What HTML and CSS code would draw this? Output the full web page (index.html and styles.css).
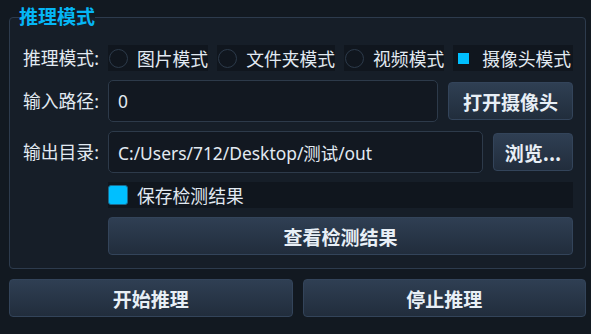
FILE: index.html
```html
<!DOCTYPE html>
<html lang="zh-CN">
<head>
    <meta charset="UTF-8">
    <meta name="viewport" content="width=device-width, initial-scale=1.0">
    <title>推理模式</title>
    <link rel="stylesheet" href="styles.css">
</head>
<body>
    <fieldset class="group">
        <legend class="group-title">推理模式</legend>

        <div class="form-row">
            <span class="label">推理模式:</span>
            <div class="mode-list">
                <label class="mode"><span class="radio"></span>图片模式</label>
                <label class="mode"><span class="radio"></span>文件夹模式</label>
                <label class="mode"><span class="radio"></span>视频模式</label>
                <label class="mode mode-last"><span class="radio checked"></span>摄像头模式</label>
            </div>
        </div>

        <div class="form-row">
            <span class="label">输入路径:</span>
            <div class="field">
                <input type="text" class="text-input" value="0">
                <button class="btn btn-side btn-cam">打开摄像头</button>
            </div>
        </div>

        <div class="form-row">
            <span class="label">输出目录:</span>
            <div class="field">
                <input type="text" class="text-input" value="C:/Users/712/Desktop/测试/out">
                <button class="btn btn-side btn-browse">浏览...</button>
            </div>
        </div>

        <div class="form-row">
            <span class="label"></span>
            <label class="save-check"><span class="checkbox"></span>保存检测结果</label>
        </div>

        <div class="form-row">
            <span class="label"></span>
            <button class="btn btn-wide">查看检测结果</button>
        </div>
    </fieldset>

    <div class="actions">
        <button class="btn btn-action">开始推理</button>
        <button class="btn btn-action">停止推理</button>
    </div>
</body>
</html>
```

FILE: styles.css
```css
body {
    margin: 0;
    padding: 7px 5px 0 9px;
    background-color: #121921;
    color: #e2eaf2;
    font-family: "Noto Sans", "Noto Sans CJK SC", sans-serif;
    font-size: 17.8px;
    width: 577px;
}
.group {
    margin: 0;
    padding: 18px 12px 13px 13px;
    border: 1px solid #2d3b4d;
    border-radius: 4px;
    background-color: #161e28;
    display: flex;
    flex-direction: column;
    gap: 9px;
}
.group-title {
    margin-left: -4px;
    padding: 0;
    color: #05b6f5;
    font-size: 19px;
    font-weight: bold;
    line-height: 20px;
}
.form-row {
    display: flex;
    align-items: center;
}
.label {
    width: 85px;
    flex-shrink: 0;
    line-height: 22px;
}
.mode-list {
    flex: 1;
    display: flex;
    gap: 9px;
}
.mode {
    display: flex;
    align-items: center;
    gap: 9px;
    height: 26px;
    padding-left: 1px;
    background-color: #10161e;
    white-space: nowrap;
}
.mode-last {
    flex: 1;
}
.radio {
    width: 17px;
    height: 17px;
    border: 1px solid #2c3a4a;
    border-radius: 50%;
    position: relative;
}
.radio.checked {
    border-color: transparent;
}
.radio.checked::after {
    content: "";
    position: absolute;
    left: 3px;
    top: 3px;
    width: 11px;
    height: 11px;
    background-color: #00bfff;
}
.field {
    flex: 1;
    display: flex;
    align-items: center;
    gap: 10px;
}
.text-input {
    flex: 1;
    min-width: 0;
    height: 42px;
    box-sizing: border-box;
    padding: 0 9px;
    border: 1px solid #2d3a4a;
    border-radius: 5px;
    background-color: #121821;
    color: #e2eaf2;
    font-family: inherit;
    font-size: 17.4px;
    outline: none;
}
.btn {
    height: 38px;
    box-sizing: border-box;
    border: 1px solid #33445a;
    border-radius: 4px;
    background: linear-gradient(#2f3f53, #212d3c);
    color: #e8eff6;
    font-family: "Noto Sans CJK SC", sans-serif;
    font-size: 19px;
    font-weight: bold;
    cursor: pointer;
}
.btn-cam {
    width: 125px;
}
.btn-browse {
    width: 80px;
}
.save-check {
    flex: 1;
    display: flex;
    align-items: center;
    gap: 9px;
    height: 26px;
    background-color: #10161e;
}
.checkbox {
    width: 18px;
    height: 18px;
    border: 1px solid #1a6a8e;
    border-radius: 3px;
    background-color: #00bfff;
}
.btn-wide {
    flex: 1;
}
.actions {
    display: flex;
    gap: 10px;
    margin-top: 10px;
}
.btn-action {
    flex: 1;
}
```
